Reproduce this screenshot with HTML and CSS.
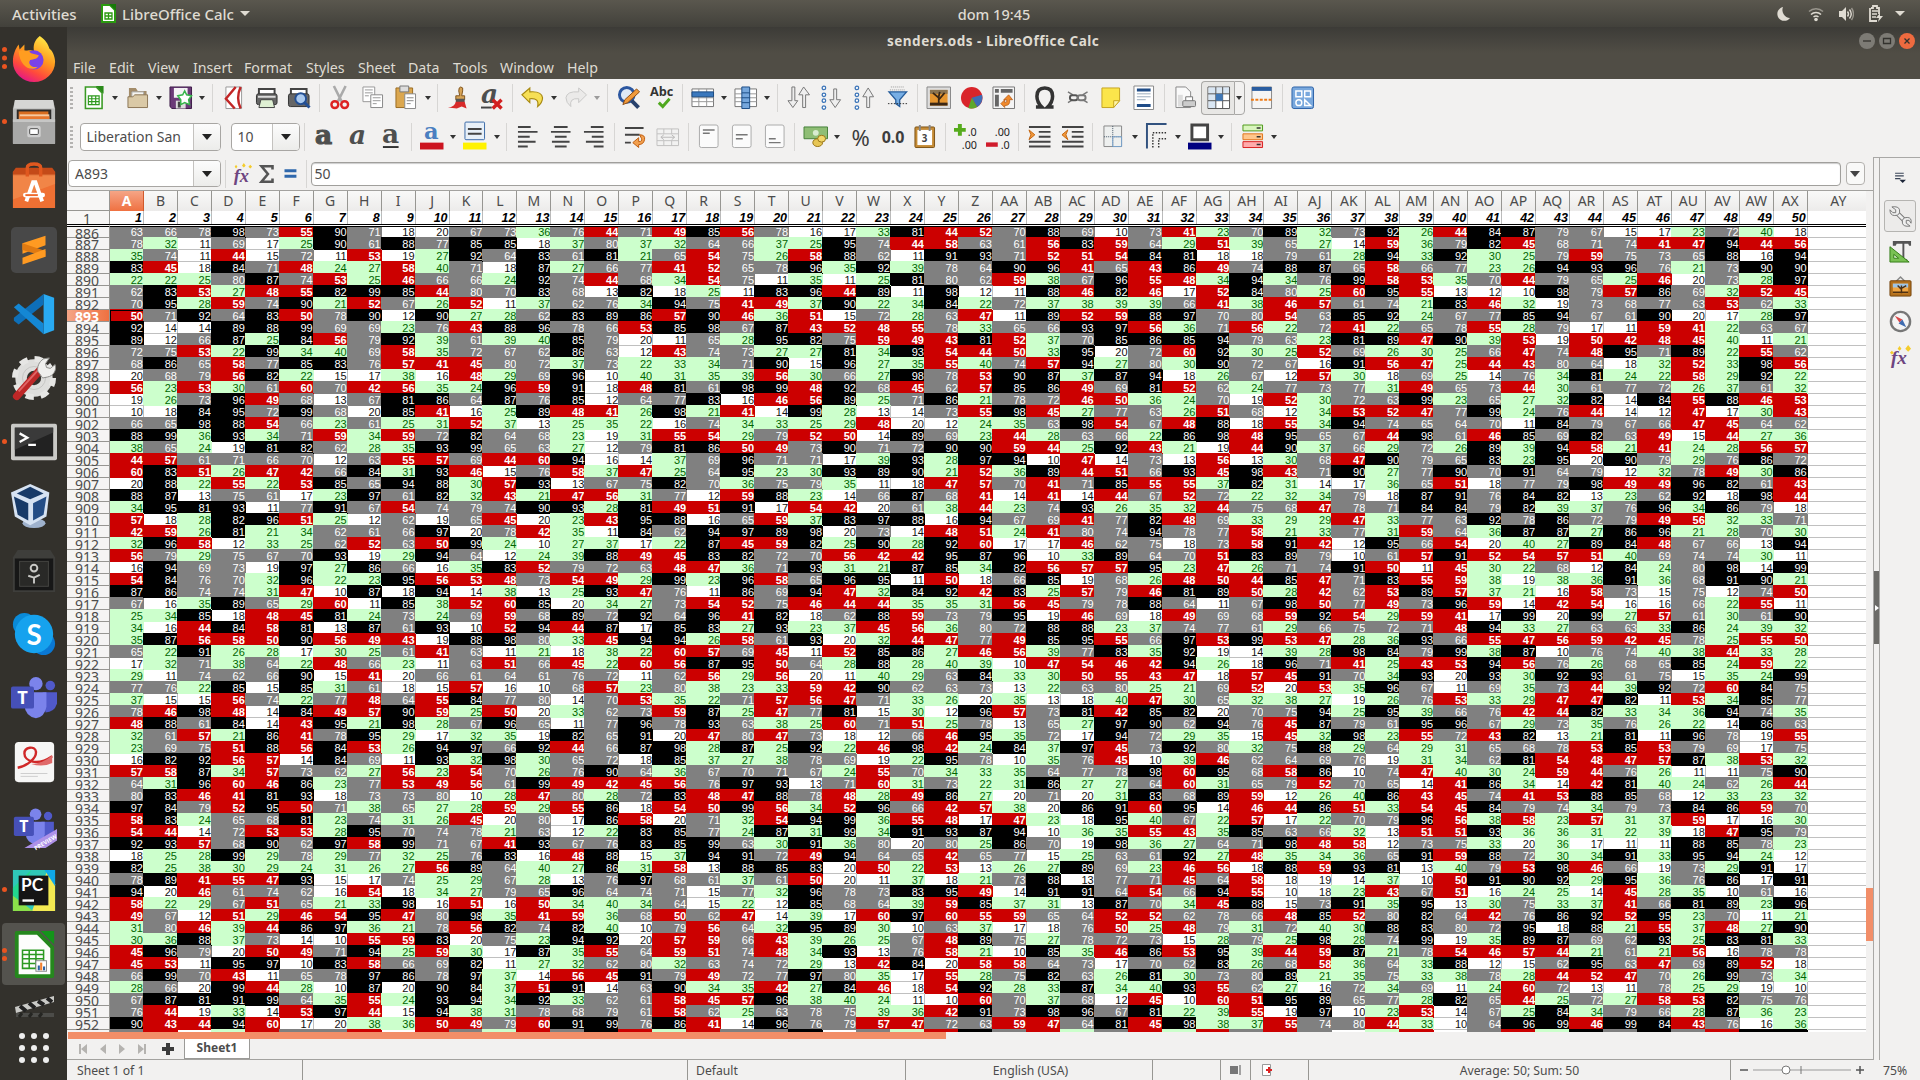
FILE: index.html
```html
<!DOCTYPE html>
<html lang="en">
<head>
<meta charset="utf-8">
<title>senders.ods - LibreOffice Calc</title>
<link rel="stylesheet" href="styles.css">
</head>
<body>
<header class="topbar">
  <div class="topbar-left"><span class="activities">Activities</span>
    <svg class="app-ico" width="15" height="19" viewBox="0 0 15 19"><path d="M1 1h8l5 5v12H1z" fill="#fff" stroke="#2a9a10" stroke-width="2"/><path d="M8 0h7v7z" fill="#18780a"/><path d="M4 9h7v6H4zM4 12h7M7.500 9v6" fill="none" stroke="#2a9a10" stroke-width="1.300"/></svg>
    <span>LibreOffice Calc</span><i class="tri"></i></div>
  <div class="clock">dom 19:45</div>
  <div class="tray">
    <svg width="14" height="16" viewBox="0 0 14 16"><path d="M6 1a7 7 0 1 0 7 11A8 8 0 0 1 6 1z"/></svg>
    <svg width="16" height="16" viewBox="0 0 16 16"><g fill="none" stroke="#dfdbd2" stroke-width="1.500"><path d="M1 5.500a10 10 0 0 1 14 0" opacity=".5"/><path d="M3 8.500a7 7 0 0 1 10 0M5.500 11a4 4 0 0 1 5 0"/></g><circle cx="8" cy="13.500" r="1.800"/></svg>
    <svg width="16" height="16" viewBox="0 0 16 16"><path d="M1 5h3l4-4v14l-4-4H1z"/><g fill="none" stroke="#dfdbd2" stroke-width="1.400"><path d="M9.500 5.500q2 2.500 0 5M11.500 3.500q3.500 4.500 0 9"/><path d="M13.500 2q4 6 0 12" opacity=".5"/></g></svg>
    <svg width="15" height="18" viewBox="0 0 15 18"><path d="M3 3h2V1h4v2h2v6M2 3v13h7" fill="none" stroke="#dfdbd2" stroke-width="1.800"/><path d="M4 6h6M4 9h5M4 12h4" stroke="#dfdbd2" stroke-width="1.500"/><path d="M12 8l-4 5h3l-1 4 5-6h-3z"/></svg>
    <i class="tri"></i>
  </div>
</header>
<div class="desktop">
<nav class="dock">
  <div class="app run3"><svg viewBox="0 0 48 48"><defs><linearGradient id="ff" x1=".8" y1="0" x2=".3" y2="1"><stop offset="0" stop-color="#fff04a"/><stop offset=".45" stop-color="#ff9a1e"/><stop offset=".75" stop-color="#ff4a3c"/><stop offset="1" stop-color="#e3158a"/></linearGradient></defs><path d="M30 1c6 4 9 9 10 13 3 2 6 8 6 14a22 21 0 0 1-44 0c0-8 3-14 6-18l1 5 5-5v7c4-1 6-2 10 0-1-6 0-11 6-16z" fill="url(#ff)"/><circle cx="24" cy="26" r="10" fill="#7a42e8"/><path d="M8 17c5-2 10-1 13 2l8 2c-1 4-5 4-9 5-3 4 2 9 8 7-7 6-19 0-20-16z" fill="#ff9d20"/></svg></div>
  <div class="app run1"><svg viewBox="0 0 48 48"><path d="M4 2h40l2 8v36H2V10z" fill="#b9b9b7"/><path d="M4 1h40l1 9H3z" fill="#d6d6d4"/><path d="M6 11h36v13H6z" fill="#2c2b29"/><path d="M8 13h31v10H8z" fill="#d96d20"/><path d="M9 16h31v7H9z" fill="#f7c9a0"/><path d="M9 18h31v5H9z" fill="#e8772d"/><path d="M2 21h44v26H2z" fill="#a9a9a8"/><path d="M2 21h44v3H2z" fill="#c6c6c5"/><rect x="17" y="28" width="14" height="12" rx="2" fill="#cfcfcf"/><rect x="19.500" y="31" width="9" height="6" rx="1" fill="#fff" stroke="#444"/></svg></div>
  <div class="app"><svg viewBox="0 0 48 48"><path d="M2 9h44v38H2z" fill="#ef7033"/><path d="M2 9l3-4h38l3 4v4H2z" fill="#c44a18"/><path d="M2 12h44v10L2 38z" fill="#f29355" opacity=".6"/><path d="M17 14V5q0-4 7-4t7 4v9" fill="none" stroke="#e0581f" stroke-width="3.500"/><path d="M16 40l7-20h2.500l7 20" fill="none" stroke="#fff" stroke-width="4"/><path d="M15 33.500h18" stroke="#fff" stroke-width="5" stroke-linecap="round"/><path d="M15 33.500h13" stroke="#ef6a2c" stroke-width="2"/></svg></div>
  <div class="app"><svg viewBox="0 0 48 48"><rect width="48" height="48" rx="5" fill="#484848"/><path d="M12 17l24-8v10l-24 9z" fill="#ff9a22"/><path d="M12 17l24 8v6l-24-7z" fill="#e07a12"/><path d="M12 32l24-9v8l-24 8z" fill="#ff9a22"/></svg></div>
  <div class="app"><svg viewBox="0 0 48 48"><path d="M34 3l11 4v34l-11 4z" fill="#29aaf2"/><path d="M34 3v11L8 35l-5-4 0-3z" fill="#0e6fb8"/><path d="M3 17l5-4 26 21v11z" fill="#1487d4"/></svg></div>
  <div class="app"><svg viewBox="0 0 48 48"><circle cx="24" cy="24" r="13.500" fill="none" stroke="#dededc" stroke-width="12"/><circle cx="24" cy="24" r="20" fill="none" stroke="#e6e6e4" stroke-width="6" stroke-dasharray="8.500 7.200"/><circle cx="24" cy="24" r="12" fill="none" stroke="#c4c4c2"/><path d="M6 43l24-27" stroke="#bd2727" stroke-width="8" stroke-linecap="round"/><path d="M8 38l20-22" stroke="#e06464" stroke-width="2"/><path d="M28 17c-1-4 1-10 6-13l6-1-4 6 1 4 4 1 5-4c2 6-2 12-8 13l-5 1z" fill="#efefed" stroke="#8b8b88"/></svg></div>
  <div class="app run1"><svg viewBox="0 0 48 48"><rect x="0" y="5" width="48" height="38" rx="2" fill="#c9c9c6"/><rect x="4" y="9" width="40" height="30" fill="#222"/><path d="M4 9h40v5L4 32z" fill="#3a3a3a"/><path d="M9 15l8 4.500-8 4.500M18 27h8" fill="none" stroke="#fff" stroke-width="2.400"/></svg></div>
  <div class="app"><svg viewBox="0 0 48 48"><ellipse cx="24" cy="42" rx="12" ry="5" fill="#9fb2cd"/><path d="M20 1l20 9-3 25-17 9L4 35 0 10z" fill="#d6e2f2"/><path d="M20 4l14 7-14 6-14-6z" fill="#183a68"/><path d="M3 14l15 7v18L7 33z" fill="#183a68"/><path d="M37 14l-14 7v18l11-6z" fill="#244d86"/></svg></div>
  <div class="app"><svg viewBox="0 0 48 48"><path d="M7 3h34l5 8v36H2V11z" fill="#3e3e3b"/><path d="M4 12h40v33H4z" fill="#171717"/><rect x="9" y="15" width="30" height="26" fill="#292927" stroke="#454542"/><circle cx="24" cy="22" r="3.500" fill="none" stroke="#c8c8c5" stroke-width="2"/><path d="M24 32v6M24 32l-6-2M24 32l6-3" stroke="#c8c8c5" stroke-width="2"/></svg></div>
  <div class="app"><svg viewBox="0 0 48 48"><circle cx="14" cy="14" r="12" fill="#0a8ad8"/><circle cx="34" cy="34" r="12" fill="#0a78d4"/><circle cx="24" cy="24" r="20" fill="#16a2ee"/><text x="24" y="35" class="skype-s">S</text></svg></div>
  <div class="app"><svg viewBox="0 0 48 48"><g id="teams"><circle cx="41" cy="11" r="5" fill="#5059c9"/><path d="M33 18h15v12q-3 9-12 9z" fill="#5059c9"/><circle cx="26" cy="9" r="7" fill="#7b83eb"/><path d="M16 18h21v15q-2 11-11 12-11-2-12-13z" fill="#7b83eb"/><rect x="0" y="12" width="24" height="23" rx="2" fill="#4650b8"/><text x="12" y="30" class="teams-t">T</text></g></svg></div>
  <div class="app"><svg viewBox="0 0 48 48"><rect x="4" y="3" width="41" height="42" rx="4" fill="#f6f6f5"/><path d="M7 30c10-2 20-10 19-17-1-6-12-5-12 2 0 8 13 14 29 3" fill="none" stroke="#d02828" stroke-width="2.500"/><path d="M21 26q12 0 22-9v8q-10 5-22 1z" fill="#e06a6a"/><path d="M10 36h28M10 39h18" stroke="#ccc"/></svg></div>
  <div class="app"><svg viewBox="0 0 48 48"><g transform="translate(3 4) scale(.87)"><use href="#teams"/></g><path d="M14 47l34-20v12l-12 8z" fill="#ad91e8"/><text x="24" y="49" transform="rotate(-31 26 46)" class="preview-t">PREVIEW</text></svg></div>
  <div class="app run1"><svg viewBox="0 0 48 48"><path d="M2 3h44v43H2z" fill="#2fc7b8"/><path d="M2 22L21 3 2 46z" fill="#22d88f"/><path d="M38 3l8 15v28H22z" fill="#f3ea52"/><path d="M35 3h11v17z" fill="#10a8e8"/><path d="M2 30l21 16H2z" fill="#8be04a"/><rect x="8" y="9" width="31" height="31" fill="#151515"/><text x="10.500" y="25" class="pc-t">PC</text><path d="M12 35h12" stroke="#fff" stroke-width="2.500"/></svg></div>
  <div class="app active run2"><svg viewBox="0 0 48 48"><path d="M6 2h22l15 15v30H6z" fill="#fdfdfc" stroke="#25871d" stroke-width="4" stroke-linejoin="round"/><path d="M31 0h14v14z" fill="#14941a"/><path d="M12 20h22v19H12zM12 24.500h22M12 29h22M12 34h22M19 20v19M26 20v19" fill="none" stroke="#2c9a22" stroke-width="1.600"/><rect x="26" y="31" width="11" height="11" fill="#fff" stroke="#888"/><path d="M29 41v-5" stroke="#2b62a5" stroke-width="2.200"/><path d="M31.500 41v-8" stroke="#f08030" stroke-width="2.200"/><path d="M34.500 41v-4" stroke="#2b62a5" stroke-width="2.200"/></svg></div>
  <div class="clapper"><svg width="44" height="22" viewBox="0 0 44 22"><path d="M3 11L42 0v6L4 17z" fill="#c9c9c6"/><path d="M8 10l6 5M17 7l6 5M26 5l6 4M35 2l5 4" stroke="#222" stroke-width="4"/><path d="M4 17h38v4H4z" fill="#4c4c49"/><path d="M10 17l-3 4M20 17l-3 4M30 17l-3 4" stroke="#252522" stroke-width="3"/></svg></div>
  <div class="dots"><i></i><i></i><i></i><i></i><i></i><i></i><i></i><i></i><i></i></div>
</nav>
<main class="window">
  <div class="chrome">
    <div class="title"><span>senders.ods - LibreOffice Calc</span>
      <div class="winbtns"><svg width="16" height="16" viewBox="0 0 16 16"><circle cx="8" cy="8" r="8"/><path d="M4 8h8"/></svg><svg width="16" height="16" viewBox="0 0 16 16"><circle cx="8" cy="8" r="8"/><path d="M4.500 5.500h7v5h-7z"/></svg><svg class="close" width="16" height="16" viewBox="0 0 16 16"><circle cx="8" cy="8" r="8"/><path d="M5.500 5.500l5 5M10.500 5.500l-5 5"/></svg></div></div>
    <div class="menu"><span>File</span><span>Edit</span><span>View</span><span>Insert</span><span>Format</span><span>Styles</span><span>Sheet</span><span>Data</span><span>Tools</span><span>Window</span><span>Help</span></div>
  </div>
  <div class="toolbar">
    <i class="grip"></i>
    <b class="ic"><svg viewBox="0 0 24 24"><path d="M3.500 1h11l6 6v16h-17z" fill="#fff" stroke="#3a9a24" stroke-width="1.600"/><path d="M14 0h8v8z" fill="#2a8a1a"/><path d="M6.500 10h11v9h-11zM6.500 13h11M6.500 16h11M10 10v9M14 10v9" fill="none" stroke="#2f9a1f" stroke-width="1.200"/></svg></b><u></u>
    <b class="ic"><svg viewBox="0 0 24 24"><path d="M3 21V2h7l2 3h9v16z" fill="#a38c6a"/><path d="M6 6h12v9H6z" fill="#f7f5f0" stroke="#aaa"/><path d="M2 22V11h5l2-2h13v13z" fill="#dac9a6" stroke="#8c7656"/></svg></b><u></u>
    <b class="ic"><svg viewBox="0 0 24 24"><path d="M1 1h22v22H3l-2-2z" fill="#6b3a78" stroke="#3c1c48"/><path d="M5 2h14v10H5z" fill="#f4f2f5"/><path d="M7 15h10v8H7z" fill="#ddd"/><path d="M9 16h3v6H9z" fill="#444"/><path d="M16 5l2 4 5 1-3 4 1 5-5-2-4 2v-5l-3-4 5-1z" fill="#fff" stroke="#36b64a" stroke-width="1.500"/></svg></b><u></u><s></s>
    <b class="ic"><svg viewBox="0 0 24 24"><path d="M4 1h16v22H4z" fill="#fff" stroke="#999"/><path d="M14 1L4 13l9 10M19 1q-5 11 0 22" fill="none" stroke="#c22626" stroke-width="2.500"/></svg></b>
    <b class="ic"><svg viewBox="0 0 24 24"><path d="M4 3h16v7H4z" fill="#fff" stroke="#444" stroke-width="2"/><rect x="1.500" y="8" width="21" height="11" rx="2" fill="#666" stroke="#333"/><path d="M3 11h18" stroke="#ddd" stroke-width="2"/><path d="M6 14h12l2 8H4z" fill="#dff0d3" stroke="#444"/></svg></b>
    <b class="ic"><svg viewBox="0 0 24 24"><path d="M4 3h16v7H4z" fill="#fff" stroke="#444" stroke-width="2"/><rect x="1.500" y="8" width="21" height="13" rx="2" fill="#666" stroke="#333"/><circle cx="14" cy="13" r="5.500" fill="#aac9ee" stroke="#234f94" stroke-width="2"/><path d="M18 17l5 5" stroke="#234f94" stroke-width="3"/></svg></b><s></s>
    <b class="ic"><svg viewBox="0 0 24 24"><path d="M6 0l8 16M18 0l-8 16" stroke="#aaa" stroke-width="2.600"/><circle cx="7" cy="19" r="3.500" fill="none" stroke="#d22" stroke-width="2.500"/><circle cx="17" cy="19" r="3.500" fill="none" stroke="#d22" stroke-width="2.500"/></svg></b>
    <b class="ic"><svg viewBox="0 0 24 24"><path d="M2 1h12v15H2z" fill="#fff" stroke="#999"/><path d="M4 4h8M4 7h8M4 10h4" stroke="#999"/><path d="M10 9h12v13H10z" fill="#fff" stroke="#888"/><path d="M12 12h8M12 15h8M12 18h4" stroke="#999"/></svg></b>
    <b class="ic"><svg viewBox="0 0 24 24"><path d="M2 2h17v20H2z" fill="#dba74f" stroke="#9a6c21"/><path d="M6 0h9v6H6z" fill="#ddd" stroke="#777"/><path d="M11 8h11v15H11z" fill="#fff" stroke="#888"/><path d="M13 12h7M13 15h7M13 18h4" stroke="#888"/></svg></b><u></u><s></s>
    <b class="ic"><svg viewBox="0 0 24 24"><path d="M14 1q3 0 2 4l-1 5h3v4H9v-4h4l-1-5q0-4 2-4z" fill="#d7a354" stroke="#805520"/><path d="M9 13h9v4H9z" fill="#555"/><path d="M9 16h9l2 7-5-2-5 2-9-1q7-1 8-6z" fill="#d82a2a"/></svg></b>
    <b class="ic"><svg viewBox="0 0 24 24"><text x="1" y="17" class="ga gi">a</text><path d="M1 22h11" stroke="#444" stroke-width="2"/><path d="M13 14l9 9M22 14l-9 9" stroke="#d22020" stroke-width="3.500"/></svg></b><s></s>
    <b class="ic"><svg viewBox="0 0 24 24"><path d="M1 9l8-7v4q12-1 13 6 0 5-5 9 2-9-8-8v4z" fill="#f6df55" stroke="#a88a12" stroke-width="1.200"/></svg></b><u></u>
    <b class="ic dim"><svg viewBox="0 0 24 24"><path d="M23 9l-8-7v4Q3 5 2 12q0 5 5 9-2-9 8-8v4z" fill="#e3e3e1" stroke="#999"/></svg></b><u class="dim"></u><s></s>
    <b class="ic"><svg viewBox="0 0 24 24"><circle cx="10" cy="9" r="7.500" fill="#dfe9f6" stroke="#2c57a0" stroke-width="3"/><path d="M15 15l7 7" stroke="#28416c" stroke-width="4"/><path d="M6 19l2-5L20 3l3 3-12 11z" fill="#f09a3c" stroke="#8d4d12"/></svg></b>
    <b class="ic"><svg viewBox="0 0 24 24"><text x="0" y="10" class="abc">Abc</text><path d="M9 17l4 4 7-8" fill="none" stroke="#4fa81e" stroke-width="3"/></svg></b><s></s>
    <b class="ic"><svg viewBox="0 0 24 24"><path d="M1 3h22v18H1z" fill="#fff" stroke="#777"/><path d="M1 12h22M1 16h22M8 3v18M16 3v18" stroke="#999"/><path d="M1 6h22v5H1z" fill="#3a78bd" stroke="#1c4d85"/></svg></b><u></u>
    <b class="ic"><svg viewBox="0 0 24 24"><path d="M1 3h22v18H1z" fill="#fff" stroke="#777"/><path d="M1 8h22M1 12h22M1 16h22" stroke="#999"/><path d="M8 1h8v22H8z" fill="#76a7dc" stroke="#1c4d85"/><path d="M8 7h8M8 12h8M8 17h8" stroke="#1c4d85"/></svg></b><u></u><s></s>
    <b class="ic"><svg viewBox="0 0 24 24"><path d="M5 1h3v14h3l-5 7-5-7h4zM16 22h3V9h4l-6-8-5 8h4z" fill="#eee" stroke="#777"/></svg></b>
    <b class="ic"><svg viewBox="0 0 24 24"><g fill="#fff" stroke="#3d75b8" stroke-width="1.300"><circle cx="4" cy="2" r="1.800"/><circle cx="4" cy="9" r="1.800"/><circle cx="4" cy="15" r="1.800"/><circle cx="4" cy="22" r="1.800"/></g><path d="M14 3h3v11h4l-5.500 8-5.500-8h4z" fill="#eee" stroke="#777"/></svg></b>
    <b class="ic"><svg viewBox="0 0 24 24"><g fill="#fff" stroke="#3d75b8" stroke-width="1.300"><circle cx="4" cy="2" r="1.800"/><circle cx="4" cy="9" r="1.800"/><circle cx="4" cy="15" r="1.800"/><circle cx="4" cy="22" r="1.800"/></g><path d="M14 22h3V11h4l-5.500-9L10 11h4z" fill="#eee" stroke="#777"/></svg></b>
    <b class="ic"><svg viewBox="0 0 24 24"><path d="M5 1h14M4 4h16" stroke="#999" stroke-dasharray="1 1"/><path d="M3 6h18l-7 8v7l-4-3v-4z" fill="#77aee4" stroke="#255c9a" stroke-width="1.300"/><path d="M2 18h20" stroke="#333" stroke-dasharray="1.500 1.500"/></svg></b><s></s>
    <b class="ic"><svg viewBox="0 0 24 24"><path d="M0 1h24v22H0z" fill="#ddd" stroke="#888"/><path d="M3 4h18v16H3z" fill="#e69630"/><path d="M3 4h18v4H3z" fill="#8a7350"/><path d="M3 17h18v3H3z" fill="#3b2714"/><path d="M12 19v-7L6 7M12 14l6-7M12 11l1-5" fill="none" stroke="#3b2714" stroke-width="1.800"/></svg></b>
    <b class="ic"><svg viewBox="0 0 24 24"><circle cx="12" cy="12" r="11" fill="#d9252a"/><path d="M12 12l10.500-3a11 11 0 0 1-5 12.500z" fill="#3e6db5"/><path d="M12 12l5.500 9.500a11 11 0 0 1-9 1z" fill="#5da82c"/></svg></b>
    <b class="ic"><svg viewBox="0 0 24 24"><path d="M1 1h22v22H1z" fill="#f5f5f5" stroke="#777"/><path d="M3 3h4v4H3zM9 3h12v4H9zM3 9h4v12H3z" fill="#666"/><path d="M17 9l4 5h-3q1 6-5 6v2l-4-4 4-4v3q3 0 2-3h-3z" fill="#f08a2c" stroke="#b0500c" stroke-width=".7"/></svg></b><s></s>
    <b class="ic"><svg viewBox="0 0 24 24"><path d="M3 21.500h6q-5-5-5-11 0-8.500 8-8.500t8 8.500q0 6-5 11h6" fill="none" stroke="#333" stroke-width="3.600"/></svg></b>
    <b class="ic"><svg viewBox="0 0 24 24"><path d="M2 6l5 3M2 17l5-3M22 6l-5 3M22 17l-5-3" stroke="#777" stroke-width="1.500"/><rect x="4" y="9.500" width="8" height="5" rx="2.500" fill="none" stroke="#555" stroke-width="2"/><rect x="12" y="9.500" width="8" height="5" rx="2.500" fill="none" stroke="#777" stroke-width="2"/></svg></b>
    <b class="ic"><svg viewBox="0 0 24 24"><path d="M3 2h18v13l-6 7H3z" fill="#fbe54b" stroke="#c6a520"/><path d="M15 22v-7h6z" fill="#fff6a8" stroke="#c6a520"/></svg></b>
    <b class="ic"><svg viewBox="0 0 24 24"><path d="M2 0h20v24H2z" fill="#fff" stroke="#888"/><path d="M5 4h14M5 20h14" stroke="#1f4c87" stroke-width="3"/><path d="M5 8h14M5 11h14M5 14h9" stroke="#9ab"/></svg></b><s></s>
    <b class="ic"><svg viewBox="0 0 24 24"><path d="M3 1h10l5 5v16H3z" fill="#fafafa" stroke="#888"/><path d="M5 9h5v12H5z" fill="#ddd"/><path d="M13 11h7v6h-7z" fill="#fff" stroke="#777"/><rect x="10" y="15" width="13" height="6" rx="1" fill="#ccc" stroke="#777"/></svg></b>
    <b class="ic pressed"><svg viewBox="0 0 24 24"><path d="M1 1h22v22H1z" fill="#fff" stroke="#555"/><path d="M1.500 1.500H9v21H1.500zM9 1.500h13.500V8H9z" fill="#d9e6f3"/><path d="M1 8h22M1 15h22M9 1v22M16 1v22" stroke="#555"/><path d="M9 8h7v7H9z" fill="#3f78b8"/></svg></b><u class="pressed-r"></u>
    <b class="ic"><svg viewBox="0 0 24 24"><path d="M2 1h20v22H2z" fill="#f5f5f5" stroke="#888"/><path d="M2 1h20v4H2z" fill="#2a5da0"/><path d="M1 14h22" stroke="#ee7c18" stroke-width="2" stroke-dasharray="3 1.500"/></svg></b><s></s>
    <b class="ic"><svg viewBox="0 0 24 24"><rect x="1" y="1" width="22" height="22" rx="2" fill="#79a8dd" stroke="#2d62a8"/><g fill="none" stroke="#fff" stroke-width="1.500"><path d="M5 5h6v6H5zM14 5h6v6h-6zM14 14l6 6h-6z"/><circle cx="8" cy="17" r="3"/></g></svg></b>
  </div>
  <div class="toolbar second">
    <i class="grip"></i>
    <div class="combo font"><span>Liberation San</span><em></em></div><div class="combo size"><span>10</span><em></em></div><s></s>
    <b class="ic"><svg viewBox="0 0 24 24"><text x="2" y="19" class="ga gb">a</text></svg></b>
    <b class="ic"><svg viewBox="0 0 24 24"><text x="3" y="19" class="ga gi">a</text></svg></b>
    <b class="ic"><svg viewBox="0 0 24 24"><text x="3" y="18" class="ga">a</text><path d="M4 22.500h16" stroke="#333" stroke-width="2"/></svg></b><s></s>
    <b class="ic"><svg viewBox="0 0 24 24"><text x="4" y="14" class="ga blue">a</text><path d="M0 18h24v7H0z" fill="#cc1420"/></svg></b><u></u>
    <b class="ic"><svg viewBox="0 0 24 24"><rect x="2" y="-3" width="20" height="18" rx="1" fill="#e8f0f8" stroke="#3a6ba8"/><path d="M5 4h14M5 9h14" stroke="#444" stroke-width="2"/><path d="M0 18h24v7H0z" fill="#fff200"/></svg></b><u></u><s></s>
    <b class="ic"><svg viewBox="0 0 24 24"><path class="ln" d="M2 2h13M2 7h20M2 12h12M2 17h18M2 22h10"/></svg></b>
    <b class="ic"><svg viewBox="0 0 24 24"><path class="ln" d="M5 2h14M2 7h20M6 12h12M3 17h18M6 22h12"/></svg></b>
    <b class="ic"><svg viewBox="0 0 24 24"><path class="ln" d="M9 2h13M2 7h20M10 12h12M4 17h18M12 22h10"/></svg></b><s></s>
    <b class="ic"><svg viewBox="0 0 24 24"><path class="ln" d="M2 3h19M2 10h15M2 18h6"/><path d="M17 10q6 0 5 5t-6 5v3l-6-5 6-5v4q4 0 3-3z" fill="#f3a04e" stroke="#bd5d10"/></svg></b>
    <b class="ic dim"><svg viewBox="0 0 24 24"><path d="M1 4h22v17H1zM1 9h22M1 16h22M8 4v5M16 4v5M8 16v5M16 16v5" fill="#f4f4f4" stroke="#888"/><path d="M5 12.500h14M8 10l-3 2.500 3 2.500M16 10l3 2.500-3 2.500" fill="none" stroke="#777"/></svg></b><s></s>
    <b class="ic"><svg viewBox="0 0 24 24"><rect x="2.500" y="0" width="19" height="23" rx="2" fill="#fbfbfb" stroke="#aaa"/><path d="M6 5h12M6 8.500h7" stroke="#777" stroke-width="1.500"/></svg></b>
    <b class="ic"><svg viewBox="0 0 24 24"><rect x="2.500" y="0" width="19" height="23" rx="2" fill="#fbfbfb" stroke="#aaa"/><path d="M6 10h12M6 14h7" stroke="#777" stroke-width="1.500"/></svg></b>
    <b class="ic"><svg viewBox="0 0 24 24"><rect x="2.500" y="0" width="19" height="23" rx="2" fill="#fbfbfb" stroke="#aaa"/><path d="M6 14h7M6 18h12" stroke="#777" stroke-width="1.500"/></svg></b><s></s>
    <b class="ic"><svg viewBox="0 0 24 24"><path d="M0 2h24v12H0z" fill="#8fbe75" stroke="#47813a"/><circle cx="12" cy="8" r="3" fill="#d9ecd0"/><ellipse cx="14" cy="18" rx="5" ry="4" fill="#e7c655" stroke="#997518"/><ellipse cx="18" cy="14" rx="4" ry="3.500" fill="#f2d76a" stroke="#997518"/></svg></b><u></u>
    <b class="ic tx pct">%</b><b class="ic tx num">0.0</b>
    <b class="ic"><svg viewBox="0 0 24 24"><rect x="2" y="2" width="20" height="21" rx="1" fill="#c58b35" stroke="#7d5417"/><path d="M4.500 5h15v15.500h-15z" fill="#fff"/><path d="M7 0v6M17 0v6" stroke="#888" stroke-width="2"/><text x="9" y="17" class="mini">3</text></svg></b><s></s>
    <b class="ic"><svg viewBox="0 0 24 24"><path d="M6-1v12M0 5h12" stroke="#56ab1c" stroke-width="4"/><text x="14" y="11" class="dec">.0</text><text x="8" y="24" class="dec">.00</text></svg></b>
    <b class="ic"><svg viewBox="0 0 24 24"><path d="M-1 20h12" stroke="#d01c2c" stroke-width="4.500"/><text x="8" y="11" class="dec">.00</text><text x="14" y="24" class="dec">.0</text></svg></b><s></s>
    <b class="ic"><svg viewBox="0 0 24 24"><path class="ln" d="M1 2h22M11 7h12M11 12h12M1 17h22M1 22h22"/><path d="M1 5l6 5-6 5 2-5z" fill="#f39a3c" stroke="#c4650f"/></svg></b>
    <b class="ic"><svg viewBox="0 0 24 24"><path class="ln" d="M1 2h22M11 7h12M11 12h12M1 17h22M1 22h22"/><path d="M7 5l-6 5 6 5-2-5z" fill="#f39a3c" stroke="#c4650f"/></svg></b><s></s>
    <b class="ic"><svg viewBox="0 0 24 24"><path d="M3 1h18v21H3z" fill="#eef0ef" stroke="#888"/><path d="M12 1v21M3 12h18" stroke="#456" stroke-dasharray="1 1"/><path d="M12 12h9v10h-9z" fill="none" stroke="#7aa3cc"/></svg></b><u></u>
    <b class="ic"><svg viewBox="0 0 24 24"><path d="M2 24V-1h20" fill="none" stroke="#32527f" stroke-width="2"/><path d="M8 23V8h14M14 23v-9h8" fill="none" stroke="#333" stroke-width="1.500" stroke-dasharray="1.500 1.500"/></svg></b><u></u>
    <b class="ic"><svg viewBox="0 0 24 24"><path d="M4 0h16v15H4z" fill="#fff" stroke="#444" stroke-width="3"/><path d="M0 18h24v7H0z" fill="#000080"/></svg></b><u></u><s></s>
    <b class="ic"><svg viewBox="0 0 24 24"><path d="M2 0h20v6H2z" fill="#d9f5bd" stroke="#4e9a1c"/><path d="M2 9h20v6H2z" fill="#ffc68c" stroke="#e2751c"/><path d="M2 17h20v6H2z" fill="#ffabab" stroke="#d92020"/><path d="M16 3h4M16 12h4M16 20h4" stroke="#333" stroke-width="1.500"/></svg></b><u></u>
  </div>
  <div class="work">
    <div class="left">
      <div class="formula">
        <div class="combo name"><span>A893</span><em></em></div><s></s>
        <svg class="fx" viewBox="0 0 24 24"><text x="3" y="21" class="fxt">fx</text><path d="M4 4l1.500-2L7 4 5.500 6zM12 3l2-3 2 3-2 2zM19 4l2-2 2 2-2 2z" fill="#f4cc2c"/></svg>
        <svg class="fx" viewBox="0 0 24 24"><path d="M18 7V3.500H6l7 8.500-7 8.500h12V17" fill="none" stroke="#555" stroke-width="2.800"/></svg>
        <svg class="fx eq" viewBox="0 0 24 24"><path d="M6 8.500h13M6 14.500h13" stroke="#2f68ac" stroke-width="3.200"/></svg><s></s>
        <div class="input">50</div><div class="expand"></div>
      </div>
      <div class="sheet">
        <div class="corner"></div><div class="colheads" id="colheads"></div>
        <div class="rowone">1</div><div class="firstrow" id="firstrow"></div>
        <div class="rowheads" id="rowheads"></div>
        <div class="cells" id="cells"></div>
        <div class="tail"></div>
        <div class="vscroll"><i></i></div>
      </div>
      <div class="hscroll"></div>
      <div class="tabs"><svg width="70" height="12" viewBox="0 0 70 12" fill="#b5b3b0"><path d="M1 1h2v10H1zM9 1v10L3 6zM28 1v10l-6-5zM41 1v10l6-5zM60 1v10l6-5zM66 1h2v10h-2z"/></svg>
        <svg class="plus" width="12" height="12" viewBox="0 0 12 12"><path d="M6 0v12M0 6h12" stroke="#3b3b3b" stroke-width="4"/></svg><span class="tab">Sheet1</span></div>
    </div>
    <div class="splitter"><i></i></div>
    <aside class="sidebar">
      <svg class="cfg" viewBox="0 0 12 12"><path d="M1 2h8M1 4.500h8M1 7h5" stroke="#3b4658"/><path d="M5 8h6l-3 3z" fill="#1d2638"/></svg>
      <div class="side sel"><svg viewBox="0 0 24 24"><path d="M8 8l9 9" stroke="#777" stroke-width="5"/><path d="M8 8l9 9" stroke="#eee" stroke-width="3"/><path d="M3 2l4 3v3L4 8 1 5q0 6 5 6 6 0 5-6-1-4-8-3zM22 22l-4-3v-3l3 0 2 3q1-6-4-6-6 0-5 6 1 4 8 3z" fill="#eee" stroke="#777"/></svg></div>
      <div class="side"><svg viewBox="0 0 24 24"><path d="M4 1h19v5h-2l-1-2h-4v16h3v2h-8v-2h3V4H8L7 6H4z" fill="#555"/><path d="M1 7v16h20z" fill="#79c153" stroke="#317c15"/><path d="M5 15v4h5z" fill="#eaf7e0" stroke="#317c15"/></svg></div>
      <div class="side"><svg viewBox="0 0 24 24"><path d="M7 7l5-5 5 5" fill="none" stroke="#888" stroke-width="1.500"/><rect x="1" y="6" width="22" height="16" rx="1" fill="#b3701c" stroke="#74430d"/><path d="M4 9h16v10H4z" fill="#f0a541"/><path d="M4 9h16v4H4z" fill="#9cc4e6"/><path d="M13 19v-8M13 15l-4-4M13 14l5-3M4 18h16" stroke="#4c3013" stroke-width="1.500"/></svg></div>
      <div class="side"><svg viewBox="0 0 24 24"><circle cx="12" cy="12" r="10" fill="#f4f4f4" stroke="#777" stroke-width="2.500"/><path d="M6 6l8 4-3 3z" fill="#d94848"/><path d="M18 18l-8-4 4-4z" fill="#3f6cb0"/></svg></div>
      <div class="side"><svg viewBox="0 0 24 24"><text x="2" y="20" class="fxt">fx</text><path d="M1 8l2-2 2 2-2 2zM9 4l2-3 2 3-2 2zM17 4l3-4 3 4-3 3z" fill="#f4cc2c"/></svg></div>
    </aside>
  </div>
  <footer class="status"><span class="c1">Sheet 1 of 1</span><span class="c2"></span><span class="c3">Default</span><span class="c4">English (USA)</span><span class="c5"></span><span class="c6"><svg width="12" height="10" viewBox="0 0 12 10"><path d="M0 1h8v8H0z" fill="#777"/><path d="M10 0v10" stroke="#555"/></svg></span><span class="c7"><svg width="12" height="12" viewBox="0 0 12 12"><path d="M1.500.500h8v11h-8z" fill="#fff" stroke="#999"/><path d="M5 6h6M8 3v6" stroke="#d22" stroke-width="2"/></svg></span><span class="c9">Average: 50; Sum: 50</span><span class="c10"><svg width="128" height="14" viewBox="0 0 128 14"><path d="M1 7h8M117 7h8M121 3v8" stroke="#555" stroke-width="1.500"/><path d="M14 7h98" stroke="#999"/><path d="M62 3v8" stroke="#777"/><circle cx="47" cy="7" r="4" fill="#fff" stroke="#777"/></svg></span><span class="c11">75%</span></footer>
</main>
</div>
<script src="sheet.js"></script>
</body>
</html>
```
FILE: styles.css
```css
*{box-sizing:border-box}
body{margin:0;width:1920px;height:1080px;overflow:hidden;background:#f2f1f0;font:14px "Noto Sans","Open Sans",sans-serif;color:#4c4c4c}
svg{display:block}
.topbar{height:27px;background:linear-gradient(#5a574e,#42413b);display:grid;grid-template-columns:1fr 140px 1fr;align-items:center;color:#dfdbd2;font-weight:500;font-size:15px}
.topbar-left{display:flex;align-items:center;padding-left:12px;white-space:nowrap}
.activities{width:89px}
.app-ico{margin-right:6px}
.tri{border:5px solid transparent;border-top-color:#dfdbd2;border-bottom:0;margin-left:6px}
.clock{text-align:center;padding-left:68px;margin-right:-34px;margin-left:-34px;font-size:14.500px}
.tray{display:flex;justify-content:flex-end;align-items:center;gap:14px;padding-right:15px;fill:#dfdbd2}
.tray svg:first-child{margin-right:3px}
.tray .tri{margin-left:-2px}
.desktop{display:flex;height:1053px}
.dock{width:67px;background:#33312c;flex:none}
.app{height:64px;display:flex;align-items:center;justify-content:center;position:relative;top:-1px}
.app>svg{width:46px;height:46px;overflow:visible}
.app.active{background:#54534e;border-radius:4px;margin:1px 2px;height:62px}
.run1::before,.run2::before,.run3::before{content:"";position:absolute;left:2px;top:29px;width:5px;height:5px;border-radius:50%;background:#e95420}
.run3::before{top:21px;box-shadow:0 8.500px #e95420,0 17px #e95420}
.run2::before{left:0;top:25px;box-shadow:0 8px #e95420}
.skype-s{font:bold 29px Lato,sans-serif;fill:#fff;text-anchor:middle}
.teams-t{font:bold 19px "Open Sans",sans-serif;fill:#fff;text-anchor:middle}
.preview-t{font:bold 6px "Open Sans",sans-serif;fill:#fff}
.pc-t{font:bold 18px Lato,sans-serif;fill:#fff}
.clapper{height:32px;padding:9px 12px 0}
.dots{display:grid;grid-template-columns:repeat(3,6px);gap:6px;justify-content:center;padding-top:14px}
.dots i{width:6px;height:6px;border-radius:50%;background:#eee}
.window{width:1853px;display:flex;flex-direction:column}
.chrome{height:52px;background:linear-gradient(#3c3b37,#504d45 26px);color:#dfdbd2}
.title{height:28px;display:flex;align-items:center;position:relative;padding-left:820px;font-weight:bold;font-size:13.500px;letter-spacing:.5px}
.winbtns{display:flex;gap:4px;margin-left:auto;padding-right:5px}
.winbtns circle{fill:#7d7b75}
.winbtns path{fill:none;stroke:#33322e;stroke-width:1.300}
.winbtns .close circle{fill:#ee6a3f}
.menu{height:24px;display:grid;grid-template-columns:36px 39px 45px 51px 62px 52px 50px 45px 47px 67px 40px;padding-left:6px;line-height:25px;font-size:14.200px}
.toolbar{height:39px;display:flex;align-items:center;padding:0 0 2px 3px}
.grip{width:3px;height:22px;margin-right:4.500px;background:repeating-linear-gradient(#b4b3b1 0 2px,transparent 2px 4px)}
.ic{width:32.950px;height:34px;flex:none;display:flex;align-items:center;justify-content:center}
.ic svg{width:23.500px;height:23.500px;overflow:visible}
.toolbar u{width:10.400px;flex:none}
.toolbar u::before{content:"";display:block;margin:0 0 0 2px;width:0;border:3px solid transparent;border-top:4px solid #333;border-bottom:0}
.toolbar s,.formula s{width:8px;height:28px;flex:none;display:flex;justify-content:center}
.toolbar u+s{width:9.400px}
.toolbar s::before,.formula s::before{content:"";width:1px;background:#d7d6d4}
.dim{opacity:.45}
.pressed{border:1px solid #a9a8a6;border-right:0;border-radius:4px 0 0 4px;background:#e8e7e5}
.toolbar .pressed-r{height:34px;border:1px solid #a9a8a6;border-radius:0 4px 4px 0;display:flex;align-items:center;margin-right:1px}
.toolbar .pressed-r::before{margin-left:1px}
.combo{height:28px;border:1px solid #a8a6a3;border-radius:4px;background:#fff;display:flex;overflow:hidden;line-height:26px}
.combo span{flex:1;padding-left:6px;white-space:nowrap;overflow:hidden}
.combo em{width:27px;border-left:1px solid #c4c2bf;background:linear-gradient(#fcfcfc,#ececea);display:flex;align-items:center;justify-content:center}
.combo em::before{content:"";border:5px solid transparent;border-top:6px solid #222;border-bottom:0}
.combo.font{width:141px;margin-left:2px;font-size:14px}
.combo.size{width:69px;margin:0 1px 0 10px}
.combo.name{width:153px;height:27px;margin-left:1px}
.ga{font:bold 27px "DejaVu Serif",serif;fill:#4e4f4e}
.gb{font-weight:bold;stroke:#4e4f4e;stroke-width:1.200}
.gi{font-style:italic;font-weight:bold}
.blue{fill:#4a7fc0;font-size:23px}
.ln{fill:none;stroke:#444;stroke-width:2}
.abc{font:bold 13px "Open Sans",sans-serif;fill:#333}
.mini{font:bold 10px "Noto Sans",sans-serif;fill:#444}
.dec{font:11px "Noto Sans",sans-serif;fill:#222}
.tx{font-size:22px;font-weight:400;color:#3d3d3d}
.pct{padding-left:4px}
.num{font-size:16px;font-weight:bold;padding-left:3px}
.work{flex:1;display:flex;height:903px}
.left{width:1806px;display:flex;flex-direction:column}
.formula{height:33px;display:flex;align-items:center}
.fx{width:22px;height:22px;margin:0 1.500px}
.fx.eq{margin-left:0}
.formula s{margin:0}
.input{width:1530px;height:24px;border:1px solid #a09f9c;border-radius:4px;background:#fff;box-shadow:inset 0 1px 1px #ccc;padding-left:3px;line-height:22px}
.expand{width:19px;height:23px;margin-left:5px;border:1px solid #b3b1ae;border-radius:4px;background:#f9f9f8;display:flex;align-items:center;justify-content:center}
.expand::before{content:"";border:5px solid transparent;border-top:6px solid #444;border-bottom:0}
.sheet{height:842px;display:grid;grid-template-columns:43px 1698px 58px 7px;grid-template-rows:21px 13px 808px;border-top:1px solid #a3a29f;overflow:hidden}
.corner{background:#f7f6f5;border-right:1px solid #979692;border-bottom:1px solid #979692;height:20px}
.colheads{grid-column:2/4;display:grid;grid-template-columns:repeat(50,33.960px) 1fr;height:20px}
.colheads span{border-right:1px solid #979692;border-bottom:1px solid #979692;background:linear-gradient(#f9f9f8,#ecebea);text-align:center;line-height:20px;font-size:14px}
.colheads span:last-child{border-right:0;padding-left:3px}
.colheads .on{background:linear-gradient(#f5a586,#ef7141);color:#fff;font-weight:bold;border-color:#d0592b}
.rowone{grid-row:2;text-align:center;border-right:1px solid #979692;background:#f7f6f5;font-size:14px;line-height:15px;height:14px;margin-top:-1px;padding-right:2px}
.firstrow{grid-column:2/4;grid-row:2;display:grid;grid-template-columns:repeat(50,33.960px) 1fr;background:#fff;margin-top:-1px;height:14px}
.firstrow span{font:italic bold 12.500px/15px "Liberation Sans",Arial,sans-serif;color:#000;text-align:right;padding-right:1px;border-right:1px solid #bbb}
.firstrow span:last-child{border:0}
.rowheads,.cells,.tail{border-top:3px double #000;height:809px;margin-top:-1px;overflow:hidden;grid-row:3}
.rowheads{border-right:1px solid #979692;display:grid;grid-template-rows:11px repeat(66,12px) 3px;background:#f5f4f3}
.rowheads span{text-align:center;border-bottom:1px solid #979692;font-size:14px;line-height:14px;padding-right:2px}
.rowheads .on{background:linear-gradient(90deg,#f5a586,#ef7141);color:#fff;font-weight:bold}
.cells{display:grid;grid-template-columns:repeat(50,33.960px);grid-template-rows:11px repeat(66,12px) 3px;font:11px/12px "Liberation Sans",Arial,sans-serif;text-align:right;background:#fff}
.cells span{padding-right:1px;height:12px}
.cells span:nth-child(-n+50){line-height:11px;height:11px}
.w{color:#111;background:#fff;box-shadow:inset -1px -1px #c0c0c0}
.g{color:#006600;background:#cfc;box-shadow:-1px -1px #cfc}
.r{color:#fff;background:#c00;font-weight:bold;box-shadow:-1px -1px #c00}
.y{color:#fff;background:#808080;box-shadow:-1px -1px #808080}
.k{color:#fff;background:#000;box-shadow:-1px -1px #000}
.cursor{outline:1px solid #000;outline-offset:-1px}
.tail{background:repeating-linear-gradient(#fff 0 11px,#c0c0c0 11px 12px);background-position:0 -1px}
.vscroll{grid-column:4;grid-row:1/4;background:#f2f1f0}
.vscroll i{display:block;width:7px;height:53px;margin-top:697px;background:#f28e68}
.hscroll{height:7px;width:878px;margin-left:1px;background:#f28e68}
.tabs{height:21px;display:flex;align-items:center;border-bottom:1px solid #a3a29f;padding-left:11px}
.plus{margin-left:14px}
.tab{margin-left:10px;width:66px;height:20px;background:#fff;border:1px solid #9b9a97;border-top:0;text-align:center;font-weight:bold;font-size:12px;line-height:18px}
.splitter{width:7px;border:1px solid #a9a8a6;border-bottom:0}
.splitter i{display:block;width:5px;height:73px;background:#6c6b68;margin-top:413px}
.splitter i::after{content:"";display:block;border:3px solid transparent;border-left:4px solid #fff;border-right:0;position:relative;top:34px;left:1px}
.sidebar{width:40px;border-top:1px solid #a9a8a6;display:flex;flex-direction:column;align-items:center}
.cfg{width:13px;height:13px;margin:13px 0 16px}
.side{width:32px;height:32px;margin-bottom:3.200px;display:flex;align-items:center;justify-content:center}
.side svg{width:23px;height:23px}
.sel{border:1px solid #b5b4b1;border-radius:3px;background:#ecebea}
.fxt{font:italic bold 20px "Liberation Serif",serif;fill:#6d4580}
.status{height:20px;display:flex;line-height:21px;font-size:12.200px}
.status span{white-space:nowrap;flex:none}
.status .c1{width:236px;padding-left:10px;border-right:1px solid #979692}
.c2{width:385px;border-right:1px solid #979692}
.c3{width:218px;padding-left:8px;border-right:1px solid #979692}
.c4{width:247px;text-align:center;border-right:1px solid #979692;padding-left:3px}
.c5{width:68px;border-right:1px solid #979692}
.c6{width:30px;padding:5px 9px;border-right:1px solid #979692}
.c7{width:58px;padding:4px 10px;border-right:1px solid #979692}
.c9{width:422px;text-align:center;border-right:1px solid #979692}
.c10{width:149px;padding:3px 8px}
.c11{margin-left:3px}
```
FILE: sheet.js
```js
const FIRST_ROW = 886;
const ACTIVE_ROW = 893;
const rows = `63 66 78 98 73 55 90 71 18 20 67 73 36 76 44 71 49 85 56 78 16 17 33 81 44 52 70 88 69 10 73 41 23 70 89 32 73 92 26 44 84 87 79 67 15 17 23 72 40 18
78 32 11 69 17 25 90 61 88 77 85 85 18 37 80 37 32 64 66 37 25 95 74 44 58 63 61 56 83 59 64 29 51 39 65 27 14 59 36 79 82 45 68 71 74 41 47 94 44 56
35 74 11 44 15 72 11 53 19 27 92 64 83 61 81 21 65 54 75 26 58 88 62 11 91 93 71 52 51 54 84 81 18 18 79 61 28 94 33 92 30 25 79 59 75 73 65 88 16 94
83 45 18 84 71 48 24 27 58 40 71 18 87 27 66 77 41 52 65 78 96 35 92 39 78 64 90 96 41 65 43 86 49 74 88 87 65 58 66 77 23 26 94 93 96 76 21 73 90 90
22 22 25 80 87 74 53 25 46 66 66 24 92 74 44 68 34 54 75 11 35 11 25 81 80 62 59 38 67 96 55 48 34 94 34 76 99 58 53 35 70 44 79 65 25 46 20 73 28 97
62 83 53 27 48 55 82 99 85 44 80 70 83 68 13 82 18 25 11 83 96 44 89 11 98 12 11 88 46 82 46 17 52 84 80 25 60 95 55 13 12 10 98 79 57 86 69 32 52 45
70 95 28 59 74 90 21 52 67 26 52 11 37 62 76 34 94 75 41 49 37 90 22 34 84 22 72 37 38 39 39 66 41 38 46 57 61 74 21 83 46 32 19 73 68 77 63 53 62 33
50 71 92 64 83 50 78 90 12 90 27 28 62 83 89 86 57 90 46 36 51 15 72 28 63 47 11 89 52 59 88 97 70 80 54 63 85 92 24 67 77 85 94 67 61 90 20 17 28 97
92 14 14 89 88 99 69 69 23 76 43 88 96 78 66 53 85 98 67 87 43 52 48 55 78 33 65 66 93 97 56 36 71 56 22 72 41 22 65 78 55 28 79 17 11 59 41 22 63 67
89 12 66 87 25 84 56 79 92 39 61 39 40 85 79 20 11 65 28 95 82 75 59 49 43 81 52 37 70 85 86 85 94 79 63 23 81 89 47 90 39 53 19 50 42 48 45 40 11 21
72 75 53 22 99 34 40 69 58 35 72 67 62 86 63 12 43 74 73 27 27 81 34 93 54 44 50 33 95 20 72 60 92 30 25 52 69 26 30 25 66 47 74 48 95 71 89 22 55 62
68 86 65 58 77 85 83 76 57 41 45 80 72 37 73 22 33 34 71 90 15 96 27 35 55 40 74 57 94 27 80 30 90 72 67 16 91 56 47 25 44 43 80 64 18 32 52 33 98 56
20 68 79 56 82 22 15 17 38 16 48 29 69 96 10 40 31 35 39 56 30 66 27 98 78 53 90 87 37 87 94 18 26 67 12 57 30 18 69 25 14 76 34 81 24 22 58 29 92 22
56 23 53 30 61 60 70 42 56 35 24 96 59 91 18 48 81 61 98 99 48 92 68 45 62 57 85 86 49 69 81 52 62 24 77 73 77 31 49 65 73 44 30 61 77 72 26 37 61 32
19 26 73 96 49 68 13 67 81 86 64 87 76 85 12 64 77 83 16 46 56 89 25 71 86 21 78 72 46 50 36 24 70 19 52 30 72 63 99 23 65 27 32 82 14 84 55 88 46 53
10 18 84 95 72 99 68 20 85 41 16 25 89 48 41 26 98 21 41 14 99 28 13 14 73 55 98 45 27 77 63 26 51 68 12 34 53 52 47 77 99 24 76 44 14 12 47 17 30 43
66 65 98 88 54 66 23 61 25 31 52 37 13 25 35 22 16 74 34 33 25 29 48 20 12 24 35 63 98 54 67 48 88 18 55 34 94 74 65 64 70 11 84 79 67 66 47 45 64 62
88 99 36 93 34 71 59 34 59 72 82 64 68 23 19 31 55 54 29 79 52 50 14 89 69 23 44 28 63 66 22 86 98 48 95 65 67 44 98 61 46 85 69 82 63 49 15 44 27 36
38 65 24 19 81 82 62 28 35 93 99 65 63 27 12 79 81 86 50 49 73 90 71 72 90 90 59 44 25 92 43 21 19 44 90 37 66 29 72 26 89 39 94 58 21 41 24 28 56 57
44 57 61 71 66 70 12 63 55 57 69 44 60 94 16 14 37 69 96 71 71 17 39 93 28 97 94 10 47 14 73 13 56 13 30 68 47 90 79 65 83 23 95 20 90 79 29 76 86 72
60 83 51 26 47 42 66 84 31 93 46 15 76 58 37 47 25 64 95 23 30 93 89 90 21 52 36 89 44 51 66 93 45 98 43 71 90 27 77 90 70 91 64 79 12 32 78 49 30 86
20 88 22 55 22 53 85 65 94 88 30 57 93 13 67 75 82 70 36 75 79 35 11 18 47 57 70 41 71 85 55 55 37 82 31 14 17 36 65 51 18 77 79 98 49 49 96 82 61 43
88 87 13 75 61 17 23 97 61 82 32 43 21 47 56 31 77 12 59 88 23 14 66 87 68 41 14 41 14 44 67 52 72 22 32 34 79 18 87 91 76 84 82 13 23 62 92 18 98 44
34 95 81 93 11 77 91 67 54 74 79 74 90 93 28 81 49 51 91 17 54 42 20 61 38 44 23 74 93 26 35 32 44 75 68 47 78 71 84 84 79 82 39 37 76 96 34 86 79 18
57 18 28 82 96 51 25 12 62 19 65 45 20 23 43 95 88 16 65 59 37 83 97 88 16 94 67 69 41 77 82 48 69 33 29 29 47 33 77 63 92 78 86 72 79 49 56 32 33 71
42 59 26 81 21 34 62 61 66 97 20 78 42 35 11 84 62 94 97 89 98 20 73 14 48 51 24 41 80 74 94 78 77 58 21 33 77 31 59 64 36 87 87 27 86 96 21 28 70 30
32 96 58 12 33 25 62 52 63 50 99 24 10 27 37 17 22 87 45 59 82 25 90 28 92 60 17 17 46 62 75 18 73 58 91 42 12 95 66 54 20 40 27 89 84 48 67 66 13 94
56 79 29 75 67 70 93 19 29 94 64 12 24 39 88 49 45 83 82 72 70 56 42 42 95 87 96 10 33 89 64 70 51 83 89 79 10 61 57 91 52 54 57 51 40 69 74 74 30 11
16 94 69 73 19 97 27 86 66 16 35 83 52 79 72 63 48 47 36 71 93 31 21 87 85 34 82 56 57 57 95 23 47 26 71 74 91 50 11 45 30 22 68 12 84 24 80 98 14 99
54 84 76 70 32 96 22 23 95 56 53 48 73 54 49 29 99 23 96 58 65 96 95 11 50 18 66 85 19 68 26 48 50 44 85 47 71 83 55 59 38 19 38 36 91 36 68 91 90 21
87 86 74 74 31 47 10 87 18 94 14 38 13 25 93 47 76 11 86 69 94 47 32 84 92 42 83 25 57 79 46 81 89 50 28 42 62 53 89 57 37 21 16 58 73 15 75 12 74 50
67 16 35 89 65 29 60 11 85 38 52 60 85 20 34 27 73 54 52 75 46 44 44 35 35 31 56 45 79 78 88 64 11 67 98 50 77 49 73 96 59 14 42 54 16 16 66 22 55 11
25 34 85 18 48 45 81 24 73 24 69 59 68 89 72 92 64 96 41 82 18 62 88 59 73 79 95 19 46 69 18 49 69 68 59 92 54 29 59 41 17 99 20 99 27 57 61 30 61 90
34 16 44 84 58 81 13 87 61 93 10 52 94 44 87 17 85 83 27 93 23 37 45 56 36 80 72 88 88 23 37 74 77 61 29 66 75 72 71 48 94 33 27 63 63 33 86 24 39 32
35 87 56 58 50 90 56 49 43 19 88 98 80 33 45 94 94 26 58 61 93 20 32 44 47 77 49 85 95 55 66 97 53 99 53 47 28 36 93 66 55 47 56 59 42 45 78 25 55 50
65 22 91 26 28 17 30 25 61 41 63 11 21 18 38 22 60 57 69 45 11 52 85 86 27 46 56 39 77 83 35 92 19 14 39 28 98 84 79 99 38 87 10 76 74 40 38 44 33 28
17 32 71 38 64 22 48 66 23 11 63 51 66 45 22 60 56 87 95 50 64 28 88 28 40 39 10 47 54 46 42 94 26 18 96 71 41 25 43 53 94 56 76 26 68 65 85 24 59 22
29 11 74 62 66 90 15 41 20 66 61 64 61 76 72 11 62 56 29 56 20 11 40 29 63 84 33 30 50 55 43 47 18 57 45 91 70 34 93 20 93 30 92 93 61 75 15 35 24 99
77 76 22 85 15 85 31 61 18 15 57 16 10 68 57 23 80 38 23 33 59 42 90 62 63 73 13 22 63 80 25 21 69 52 20 53 35 96 67 11 69 35 73 44 39 92 72 60 84 75
37 15 15 56 74 22 77 48 64 55 84 77 80 14 70 53 35 22 71 57 56 47 71 33 26 20 35 13 18 40 47 30 65 32 38 27 19 26 76 53 33 29 47 47 82 11 53 34 85 77
78 46 98 48 14 84 49 57 90 59 25 50 20 33 62 73 59 87 25 47 77 81 15 30 12 96 57 73 81 42 85 82 20 70 75 94 25 95 39 66 76 42 44 82 33 34 36 94 74 35
48 88 61 84 14 43 95 21 98 28 67 96 65 11 77 96 78 93 63 38 25 60 71 51 25 78 13 65 27 97 90 62 94 76 45 87 79 61 95 96 67 29 73 35 76 26 22 14 86 63
32 61 57 21 86 41 78 95 29 17 32 35 19 82 65 91 20 47 80 47 73 18 12 66 46 95 35 72 17 94 72 29 35 15 45 32 98 23 55 72 43 82 13 21 81 11 96 78 19 55
23 69 75 51 88 56 84 53 26 94 97 66 92 44 66 87 98 28 87 25 92 22 46 98 42 24 84 37 97 45 73 92 80 32 75 88 29 64 29 31 65 68 78 53 85 53 79 69 17 75
16 82 92 56 57 14 84 69 11 93 32 98 30 65 72 18 85 37 27 38 78 69 19 22 95 78 10 35 76 45 10 39 46 62 64 69 76 19 31 34 62 81 54 48 47 57 87 38 53 32
57 58 87 34 57 73 62 27 56 23 54 70 26 76 90 64 36 67 70 71 67 24 55 70 34 33 35 64 77 78 98 60 95 68 58 86 10 74 47 40 30 24 59 44 76 26 11 11 75 90
64 31 96 60 46 86 23 77 53 49 56 61 99 49 42 45 56 76 97 93 13 71 60 31 73 22 31 86 27 27 64 60 31 65 79 52 70 65 14 41 86 34 14 42 81 40 24 62 26 44
80 83 46 41 81 93 18 73 73 80 10 28 47 80 28 72 83 48 47 88 78 48 28 49 86 27 20 71 20 31 83 68 89 59 12 26 40 86 43 45 74 41 53 88 85 68 12 33 23 32
97 84 79 52 95 50 71 38 65 27 28 59 29 55 86 18 54 50 99 56 34 52 96 66 42 57 38 20 86 91 60 95 14 46 44 86 51 33 54 45 84 79 74 34 79 73 84 86 59 70
58 83 24 65 68 81 23 74 31 26 45 20 80 17 86 58 20 71 32 54 94 99 36 55 48 17 47 23 18 95 40 67 22 57 17 22 70 79 96 56 38 58 23 57 31 37 59 17 16 30
54 44 14 72 53 53 28 95 70 74 78 21 63 12 22 83 85 77 24 87 31 99 34 91 93 87 94 10 36 35 55 43 35 85 63 66 32 13 51 51 93 36 36 31 22 39 18 47 95 79
92 93 57 68 90 62 97 58 99 71 67 41 93 67 76 83 85 99 63 30 91 36 80 20 80 25 86 70 19 98 36 27 64 71 98 48 58 12 73 75 33 20 36 17 11 11 88 85 78 23
18 25 28 99 29 78 29 77 32 25 76 83 16 48 88 15 37 94 91 72 49 94 64 65 42 65 77 15 25 63 61 92 27 48 35 34 36 65 91 59 88 72 30 34 91 33 95 94 24 12
82 25 38 30 29 24 31 26 27 56 89 64 40 27 86 31 58 13 88 85 83 20 50 22 53 13 26 27 89 69 23 46 56 18 88 59 93 81 13 40 79 53 98 46 66 19 73 29 91 17
78 89 41 55 47 93 15 17 74 25 29 67 28 13 76 97 68 61 37 61 50 20 11 37 18 21 73 88 13 77 71 45 64 58 18 19 14 37 10 50 91 90 92 29 95 36 76 86 17 91
94 20 46 61 74 62 16 54 18 34 27 79 65 96 64 74 71 15 77 32 96 78 73 83 95 49 14 91 91 64 54 66 94 55 10 18 23 43 67 51 16 24 25 14 45 28 35 10 61 16
58 22 29 67 51 65 21 33 98 16 51 16 50 34 40 34 64 15 22 12 85 68 64 39 59 85 37 31 13 87 70 34 45 88 15 73 91 35 95 13 30 75 33 37 41 66 81 89 23 96
49 67 12 51 29 46 54 95 47 80 98 35 41 59 36 68 50 62 47 14 39 17 60 97 60 55 59 65 64 52 52 62 78 66 48 85 52 80 82 64 42 76 86 92 52 95 23 70 11 21
31 80 46 39 44 86 97 36 21 78 56 82 74 82 40 10 79 56 64 32 95 89 30 10 63 37 17 18 76 50 25 48 79 31 72 40 30 88 83 80 72 95 18 88 21 55 37 48 27 90
30 36 88 37 73 14 10 55 59 83 20 75 23 94 92 20 57 59 66 43 39 26 25 67 48 89 75 27 78 72 73 15 28 79 25 98 28 74 99 19 35 89 87 69 62 93 25 83 81 33
45 96 79 20 50 49 71 94 25 59 30 17 87 35 55 64 59 51 74 48 34 93 13 76 58 21 10 85 35 46 86 53 95 39 44 59 87 21 78 54 46 57 44 21 61 21 56 16 78 78
45 53 11 95 97 10 83 58 66 69 82 11 27 32 62 80 32 63 74 72 29 13 42 84 20 58 58 64 73 17 70 62 83 26 68 58 36 64 33 88 12 15 62 95 63 47 69 89 52 18
66 99 70 43 11 65 78 97 86 78 97 37 14 56 45 91 79 49 72 77 97 80 35 17 55 28 75 82 63 26 81 30 73 80 89 21 35 75 33 38 78 28 44 52 47 70 26 99 73 34
28 66 20 99 44 28 10 87 20 90 84 37 51 91 14 63 90 34 35 42 27 84 46 18 54 92 28 33 87 34 40 93 55 62 27 16 72 34 69 11 24 60 72 13 11 78 25 29 19 10
67 87 81 91 99 64 35 55 24 93 94 34 92 33 62 61 58 45 57 96 38 40 24 11 10 60 70 37 68 12 45 10 60 51 95 89 65 77 28 82 65 44 25 72 27 58 53 82 75 76
76 44 19 33 14 53 97 44 15 94 38 31 78 68 79 61 58 62 25 63 78 75 39 36 42 91 73 98 96 67 81 22 39 55 19 97 10 23 53 14 67 25 84 34 79 66 28 87 36 23
90 43 44 94 60 17 20 38 36 50 49 79 60 91 99 76 86 41 14 96 76 79 57 47 72 63 59 47 64 81 45 98 38 37 55 74 80 44 33 10 64 96 99 46 99 84 43 76 16 36`
  .split('\n').map(line => line.trim().split(' ').map(Number));

// Fill bands of the row that is only just scrolled into view
const NEXT_ROW_BANDS = 'yrwgryyrwrygrykrgryykwygrkyrgyrgryrywgrwyrgkykyrkk';

// Conditional formatting: one band for each twenty values
function band(v) {
  if (v <= 20) return 'w';
  if (v <= 40) return 'g';
  if (v <= 60) return 'r';
  if (v <= 80) return 'y';
  return 'k';
}

function columnName(i) {
  const letter = n => String.fromCharCode(65 + n);
  return i < 26 ? letter(i) : letter(Math.floor(i / 26) - 1) + letter(i % 26);
}

let heads = '';
let first = '';
for (let c = 0; c < 51; c++) {
  heads += `<span${c === 0 ? ' class="on"' : ''}>${columnName(c)}</span>`;
  first += `<span>${c < 50 ? c + 1 : ''}</span>`;
}
document.getElementById('colheads').innerHTML = heads;
document.getElementById('firstrow').innerHTML = first;

let labels = '';
let cells = '';
rows.forEach((row, r) => {
  const n = FIRST_ROW + r;
  labels += `<span${n === ACTIVE_ROW ? ' class="on"' : ''}>${n}</span>`;
  row.forEach((v, c) => {
    const cursor = n === ACTIVE_ROW && c === 0 ? ' cursor' : '';
    cells += `<span class="${band(v)}${cursor}">${v}</span>`;
  });
});
for (const b of NEXT_ROW_BANDS) cells += `<span class="${b}"></span>`;
document.getElementById('rowheads').innerHTML = labels;
document.getElementById('cells').innerHTML = cells;
```
